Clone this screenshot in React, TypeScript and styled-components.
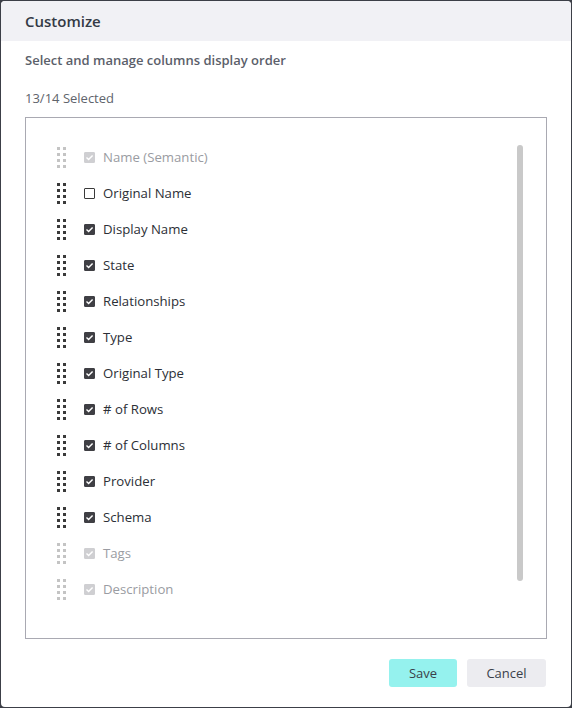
import React from "react";
import styled, { createGlobalStyle } from "styled-components";

const Global = createGlobalStyle`
  html, body { margin: 0; padding: 0; background: #3c3f47; }
  body { font-family: "Open Sans", "Noto Sans", sans-serif; }
  * { box-sizing: border-box; }
`;

const Dialog = styled.div`
  margin: 1px;
  height: 706px;
  width: 570px;
  background: #fff;
  border-radius: 4px;
  overflow: hidden;
  display: flex;
  flex-direction: column;
`;

const Header = styled.div`
  height: 40px;
  background: #f1f1f5;
  display: flex;
  align-items: center;
  padding-left: 24px;
  font-size: 15px;
  font-weight: 600;
  color: #343a45;
`;

const Body = styled.div`
  padding: 0 24px;
  display: flex;
  flex-direction: column;
`;

const Subtitle = styled.div`
  margin-top: 10px;
  font-size: 13px;
  line-height: 18px;
  font-weight: 600;
  color: #5b606a;
`;

const Count = styled.div`
  margin-top: 20px;
  font-size: 13px;
  line-height: 18px;
  color: #60646c;
`;

const ListBox = styled.div`
  position: relative;
  margin-top: 10px;
  height: 522px;
  border: 1px solid #a9a9b2;
  padding: 21px 0 0 31px;
`;

const Thumb = styled.div`
  position: absolute;
  top: 27px;
  right: 23px;
  width: 6px;
  height: 436px;
  border-radius: 3px;
  background: #c9c9c9;
`;

const Row = styled.div`
  height: 36px;
  display: flex;
  align-items: center;
`;

const Handle = styled.div<{ $disabled?: boolean }>`
  display: grid;
  grid-template-columns: 3px 3px;
  grid-auto-rows: 3px;
  column-gap: 3px;
  row-gap: 3px;
  width: 9px;
  span {
    background: ${(p) => (p.$disabled ? "#c4c4c4" : "#3a3a3a")};
  }
`;

const Box = styled.div<{ $state: "on" | "off" | "disabled" }>`
  margin-left: 18px;
  width: 11px;
  height: 11px;
  border-radius: 1px;
  display: flex;
  align-items: center;
  justify-content: center;
  background: ${(p) =>
    p.$state === "on" ? "#3f3f44" : p.$state === "disabled" ? "#cfcfd2" : "#fff"};
  border: 1px solid
    ${(p) => (p.$state === "on" ? "#3f3f44" : p.$state === "disabled" ? "#cfcfd2" : "#3a3a3a")};
`;

const Label = styled.span<{ $disabled?: boolean }>`
  margin-left: 8px;
  font-size: 13.2px;
  color: ${(p) => (p.$disabled ? "#9a9ca2" : "#2c2f36")};
`;

const Footer = styled.div`
  margin-top: 20px;
  display: flex;
  justify-content: flex-end;
  gap: 10px;
  padding-right: 1px;
`;

const Button = styled.button<{ $primary?: boolean }>`
  height: 28px;
  width: ${(p) => (p.$primary ? "68px" : "79px")};
  border: none;
  border-radius: 3px;
  font-family: "Open Sans", "Noto Sans", sans-serif;
  font-size: 13px;
  color: #3a3f4a;
  background: ${(p) => (p.$primary ? "#95f2ee" : "#ececf0")};
  padding: 0;
`;

type Item = { name: string; state: "on" | "off" | "disabled" };

const items: Item[] = [
  { name: "Name (Semantic)", state: "disabled" },
  { name: "Original Name", state: "off" },
  { name: "Display Name", state: "on" },
  { name: "State", state: "on" },
  { name: "Relationships", state: "on" },
  { name: "Type", state: "on" },
  { name: "Original Type", state: "on" },
  { name: "# of Rows", state: "on" },
  { name: "# of Columns", state: "on" },
  { name: "Provider", state: "on" },
  { name: "Schema", state: "on" },
  { name: "Tags", state: "disabled" },
  { name: "Description", state: "disabled" },
];

const Check = () => (
  <svg width="9" height="9" viewBox="0 0 9 9">
    <path d="M1.5 4.6 L3.6 6.6 L7.6 2.4" fill="none" stroke="#fff" strokeWidth="1.4" />
  </svg>
);

export default function App() {
  return (
    <>
      <Global />
      <Dialog>
        <Header>Customize</Header>
        <Body>
          <Subtitle>Select and manage columns display order</Subtitle>
          <Count>13/14 Selected</Count>
          <ListBox>
            {items.map((it) => (
              <Row key={it.name}>
                <Handle $disabled={it.state === "disabled"}>
                  {Array.from({ length: 8 }).map((_, i) => (
                    <span key={i} />
                  ))}
                </Handle>
                <Box $state={it.state}>{it.state !== "off" && <Check />}</Box>
                <Label $disabled={it.state === "disabled"}>{it.name}</Label>
              </Row>
            ))}
            <Thumb />
          </ListBox>
          <Footer>
            <Button $primary>Save</Button>
            <Button>Cancel</Button>
          </Footer>
        </Body>
      </Dialog>
    </>
  );
}
